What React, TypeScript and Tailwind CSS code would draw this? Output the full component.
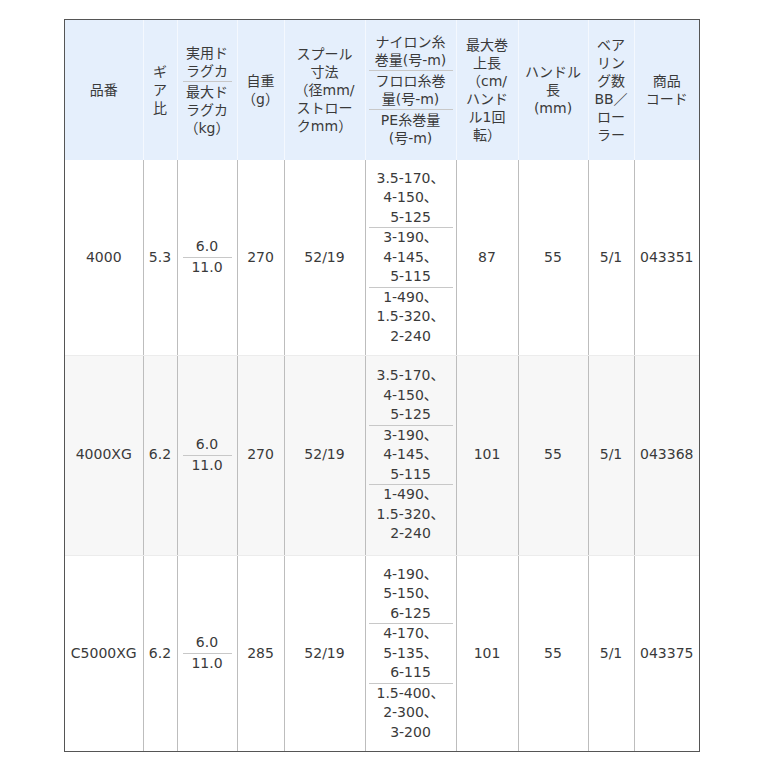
import React from "react";

type Row = {
  id: string;
  gear: string;
  drag: [string, string];
  weight: string;
  spool: string;
  nylon: string[][];
  maxLen: string;
  handle: string;
  bearing: string;
  code: string;
  bg: string;
  h: string;
  last: boolean;
};

const rows: Row[] = [
  {
    id: "4000",
    gear: "5.3",
    drag: ["6.0", "11.0"],
    weight: "270",
    spool: "52/19",
    nylon: [
      ["3.5-170、", "4-150、", "5-125"],
      ["3-190、", "4-145、", "5-115"],
      ["1-490、", "1.5-320、", "2-240"],
    ],
    maxLen: "87",
    handle: "55",
    bearing: "5/1",
    code: "043351",
    bg: "bg-white",
    h: "h-[195px]",
    last: false,
  },
  {
    id: "4000XG",
    gear: "6.2",
    drag: ["6.0", "11.0"],
    weight: "270",
    spool: "52/19",
    nylon: [
      ["3.5-170、", "4-150、", "5-125"],
      ["3-190、", "4-145、", "5-115"],
      ["1-490、", "1.5-320、", "2-240"],
    ],
    maxLen: "101",
    handle: "55",
    bearing: "5/1",
    code: "043368",
    bg: "bg-[#f7f7f7]",
    h: "h-[200px]",
    last: false,
  },
  {
    id: "C5000XG",
    gear: "6.2",
    drag: ["6.0", "11.0"],
    weight: "285",
    spool: "52/19",
    nylon: [
      ["4-190、", "5-150、", "6-125"],
      ["4-170、", "5-135、", "6-115"],
      ["1.5-400、", "2-300、", "3-200"],
    ],
    maxLen: "101",
    handle: "55",
    bearing: "5/1",
    code: "043375",
    bg: "bg-white",
    h: "h-[196px]",
    last: true,
  },
];

const th =
  "border-x border-[#f4f8fe] first:border-l-0 last:border-r-0 bg-[#e5effc] text-center align-middle font-normal leading-[18px] px-0";
const tdBase =
  "border-x border-[#bdbdbd] first:border-l-0 last:border-r-0 text-center align-middle leading-[19.5px] px-0";

function Lines({ items }: { items: string[] }) {
  return (
    <>
      {items.map((t, i) => (
        <div key={i}>{t}</div>
      ))}
    </>
  );
}

export default function App() {
  return (
    <div className="min-h-[762px] bg-white pl-[64px] pt-[19px]">
      <div className="w-[636px] border border-[#555555]">
        <table
          className="w-[634px] table-fixed border-collapse text-[14px] text-[#3a3a3a]"
          style={{ fontFamily: '"DejaVu Sans", "Noto Sans CJK JP", sans-serif' }}
        >
          <colgroup>
            <col className="w-[78px]" />
            <col className="w-[34px]" />
            <col className="w-[60px]" />
            <col className="w-[47px]" />
            <col className="w-[81px]" />
            <col className="w-[91px]" />
            <col className="w-[62px]" />
            <col className="w-[70px]" />
            <col className="w-[46px]" />
            <col className="w-[65px]" />
          </colgroup>
          <thead>
            <tr className="h-[140px]">
              <th className={th}>品番</th>
              <th className={th}>
                <Lines items={["ギ", "ア", "比"]} />
              </th>
              <th className={th}>
                <div className="mx-[5px] border-b border-[#c8c8c8] pb-[1px]">
                  <Lines items={["実用ド", "ラグカ"]} />
                </div>
                <div className="pt-[1px]">
                  <Lines items={["最大ド", "ラグカ", "（kg）"]} />
                </div>
              </th>
              <th className={th}>
                <Lines items={["自重", "（g）"]} />
              </th>
              <th className={th}>
                <Lines items={["スプール", "寸法", "（径mm/", "ストロー", "クmm）"]} />
              </th>
              <th className={th}>
                <div className="mx-[3px] border-b border-[#c8c8c8] pb-[1px] whitespace-nowrap">
                  <Lines items={["ナイロン糸", "巻量(号-m)"]} />
                </div>
                <div className="mx-[3px] border-b border-[#c8c8c8] py-[1px] whitespace-nowrap">
                  <Lines items={["フロロ糸巻", "量(号-m)"]} />
                </div>
                <div className="pt-[1px] whitespace-nowrap">
                  <Lines items={["PE糸巻量", "(号-m)"]} />
                </div>
              </th>
              <th className={th}>
                <Lines items={["最大巻", "上長", "（cm/", "ハンド", "ル1回", "転）"]} />
              </th>
              <th className={th}>
                <Lines items={["ハンドル", "長", "(mm)"]} />
              </th>
              <th className={th}>
                <Lines items={["ベア", "リン", "グ数", "BB／", "ロー", "ラー"]} />
              </th>
              <th className={th}>
                <Lines items={["商品", "コード"]} />
              </th>
            </tr>
          </thead>
          <tbody>
            {rows.map((r) => {
              const td = r.last
                ? tdBase
                : `${tdBase} border-b border-b-[#ececec]`;
              return (
                <tr key={r.id} className={`${r.h} ${r.bg}`}>
                  <td className={`${td} whitespace-nowrap`}>{r.id}</td>
                  <td className={td}>{r.gear}</td>
                  <td className={td}>
                    <div className="mx-[5px] border-b border-[#c8c8c8]">{r.drag[0]}</div>
                    <div>{r.drag[1]}</div>
                  </td>
                  <td className={td}>{r.weight}</td>
                  <td className={td}>{r.spool}</td>
                  <td className={td}>
                    {r.nylon.map((blk, i) => (
                      <div
                        key={i}
                        className={
                          i < 2
                            ? "mx-[3px] border-b border-[#c8c8c8] whitespace-nowrap"
                            : "mx-[3px] whitespace-nowrap"
                        }
                      >
                        <Lines items={blk} />
                      </div>
                    ))}
                  </td>
                  <td className={td}>{r.maxLen}</td>
                  <td className={td}>{r.handle}</td>
                  <td className={td}>{r.bearing}</td>
                  <td className={`${td} whitespace-nowrap`}>{r.code}</td>
                </tr>
              );
            })}
          </tbody>
        </table>
      </div>
    </div>
  );
}
